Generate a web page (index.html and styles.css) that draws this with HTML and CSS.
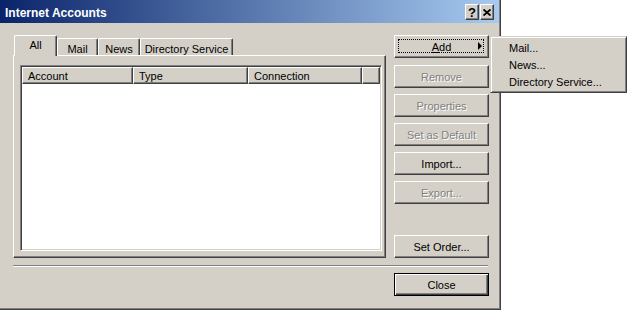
FILE: index.html
```html
<!DOCTYPE html>
<html lang="en">
<head>
  <meta charset="UTF-8" />
  <title>Internet Accounts</title>
  <link rel="stylesheet" href="styles.css">
</head>
<body>
  <div class="dialog">
    <div class="titlebar">
      <span class="title">Internet Accounts</span>
      <div class="caption-btns">
        <span class="cbtn help">?</span>
        <span class="cbtn">
          <svg width="8" height="7" viewBox="0 0 8 7"><path d="M0.5 0.5 L7.5 6.5 M7.5 0.5 L0.5 6.5" stroke="#000" stroke-width="1.8"/></svg>
        </span>
      </div>
    </div>

    <div class="content">
      <div class="main">
        <div class="tabs-col">
          <div class="tabstrip">
            <div class="tab active tab-all">All</div>
            <div class="tab tab-mail">Mail</div>
            <div class="tab tab-news">News</div>
            <div class="tab tab-dir">Directory Service</div>
          </div>
          <div class="tabpanel">
            <div class="listview">
              <div class="lv-header">
                <div class="col col-account">Account</div>
                <div class="col col-type">Type</div>
                <div class="col col-conn">Connection</div>
                <div class="col col-rest"></div>
              </div>
            </div>
          </div>
        </div>

        <div class="btn-col">
          <div class="btn focused add"><span class="label"><u>A</u>dd</span><span class="arrow"></span></div>
          <div class="btn disabled">Remove</div>
          <div class="btn disabled">Properties</div>
          <div class="btn disabled">Set as Default</div>
          <div class="btn">Import...</div>
          <div class="btn disabled">Export...</div>
          <div class="btn set-order">Set Order...</div>
        </div>
      </div>

      <div class="separator"></div>

      <div class="footer">
        <div class="btn default">Close</div>
      </div>
    </div>
  </div>

  <div class="menu">
    <div class="menu-item">Mail...</div>
    <div class="menu-item">News...</div>
    <div class="menu-item">Directory Service...</div>
  </div>
</body>
</html>
```

FILE: styles.css
```css
body {
  margin: 0;
  background-color: #fff;
  font-family: "Liberation Sans", Arial, sans-serif;
  font-size: 11px;
  color: #000;
}
.dialog {
  width: 501px;
  height: 310px;
  box-sizing: border-box;
  background-color: #d4d0c8;
  border-right: 1px solid #404040;
  border-bottom: 1px solid #404040;
  box-shadow: inset -1px -1px #808080;
  display: flex;
  flex-direction: column;
}
.titlebar {
  height: 23px;
  margin-right: 1px;
  background: linear-gradient(to right, #0a246a, #a6caf0);
  display: flex;
  align-items: center;
  justify-content: space-between;
  padding: 0 5px 0 5px;
}
.title {
  color: #fff;
  font-weight: bold;
  font-size: 12px;
  margin-top: 2px;
}
.caption-btns {
  display: flex;
  gap: 1px;
  margin-top: 1px;
}
.cbtn {
  width: 14px;
  height: 16px;
  box-sizing: border-box;
  background-color: #d4d0c8;
  border: 1px solid;
  border-color: #fff #404040 #404040 #fff;
  box-shadow: inset -1px -1px #808080;
  display: flex;
  align-items: center;
  justify-content: center;
  font-weight: bold;
  font-size: 13px;
  line-height: 1;
}
.content {
  flex: 1;
  padding: 12px 11px 0 13px;
  display: flex;
  flex-direction: column;
}
.main {
  display: flex;
  gap: 8px;
}
.tabs-col {
  width: 373px;
  display: flex;
  flex-direction: column;
}
.tabstrip {
  height: 20px;
  display: flex;
  align-items: flex-end;
  padding-left: 1px;
}
.tab {
  height: 17px;
  box-sizing: border-box;
  border-top: 1px solid #fff;
  border-left: 1px solid #fff;
  border-right: 1px solid #404040;
  box-shadow: inset -1px 0 #808080;
  border-radius: 2px 2px 0 0;
  text-align: center;
  padding-top: 4px;
  line-height: 13px;
}
.tab.active {
  height: 21px;
  margin-bottom: -1px;
  padding-top: 3px;
  background-color: #d4d0c8;
  position: relative;
  z-index: 1;
}
.tab-all { width: 43px; }
.tab-mail { width: 41px; }
.tab-news { width: 42px; }
.tab-dir { width: 93px; }
.tabpanel {
  height: 203px;
  box-sizing: border-box;
  border: 1px solid;
  border-color: #fff #404040 #404040 #fff;
  box-shadow: inset -1px -1px #808080;
  padding: 9px 3px 6px 6px;
  display: flex;
}
.listview {
  flex: 1;
  background-color: #fff;
  border: 1px solid;
  border-color: #808080 #fff #fff #808080;
  box-shadow: inset 1px 1px #404040, inset -1px -1px #d4d0c8;
  padding: 1px;
}
.lv-header {
  display: flex;
  height: 17px;
}
.col {
  box-sizing: border-box;
  background-color: #d4d0c8;
  border-top: 1px solid #fff;
  border-left: 1px solid #fff;
  border-right: 1px solid #404040;
  border-bottom: 1px solid #404040;
  box-shadow: inset -1px -1px #808080;
  padding: 2px 0 0 5px;
  line-height: 13px;
}
.col-account { width: 111px; }
.col-type { width: 115px; }
.col-conn { width: 114px; }
.col-rest { flex: 1; }
.btn-col {
  width: 95px;
  display: flex;
  flex-direction: column;
  gap: 6px;
}
.btn {
  height: 23px;
  box-sizing: border-box;
  border: 1px solid;
  border-color: #fff #404040 #404040 #fff;
  box-shadow: inset -1px -1px #808080;
  display: flex;
  align-items: center;
  justify-content: center;
  position: relative;
}
.btn.disabled {
  color: #808080;
  text-shadow: 1px 1px 0 #fff;
}
.btn.add {
  margin-bottom: 1px;
}
.btn.focused::after {
  content: "";
  position: absolute;
  left: 3px;
  top: 3px;
  right: 4px;
  bottom: 4px;
  border: 1px dotted #000;
}
.arrow {
  position: absolute;
  right: 6px;
  top: 6px;
  width: 0;
  height: 0;
  border-top: 4px solid transparent;
  border-bottom: 4px solid transparent;
  border-left: 4px solid #000;
}
.set-order {
  margin-top: auto;
}
.separator {
  margin-top: 7px;
  width: 475px;
  border-top: 1px solid #808080;
  border-bottom: 1px solid #fff;
}
.footer {
  margin-top: 6px;
  display: flex;
  justify-content: flex-end;
}
.btn.default {
  width: 95px;
  border-color: #000;
  box-shadow: inset 1px 1px #fff, inset -1px -1px #404040, inset -2px -2px #808080;
}
.menu {
  position: absolute;
  left: 490px;
  top: 36px;
  width: 137px;
  height: 57px;
  box-sizing: border-box;
  background-color: #d4d0c8;
  border: 1px solid;
  border-color: #d4d0c8 #404040 #404040 #d4d0c8;
  box-shadow: inset 1px 1px #fff, inset -1px -1px #808080;
  padding: 3px 2px 0 2px;
}
.menu-item {
  height: 17px;
  line-height: 17px;
  padding-left: 16px;
}
```
